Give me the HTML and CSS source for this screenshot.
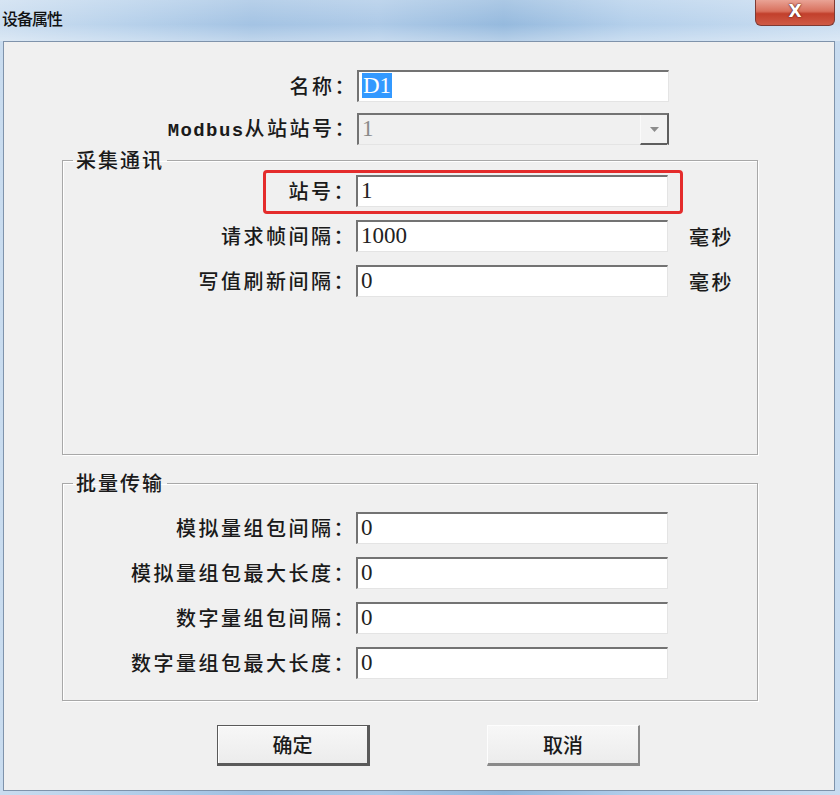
FILE: index.html
```html
<!DOCTYPE html>
<html lang="zh-CN">
<head>
<meta charset="utf-8">
<title>设备属性</title>
<link rel="stylesheet" href="styles.css">
</head>
<body>
<div class="window">
  <div class="titlebar">
    <span class="title">设备属性</span>
    <span class="close">X</span>
  </div>
  <div class="client">
    <div class="row top-row first">
      <label class="lbl">名称：</label>
      <div class="field"><span class="sel">D1</span></div>
    </div>
    <div class="row top-row second">
      <label class="lbl"><span class="mono">Modbus</span>从站站号：</label>
      <div class="combo"><span class="combo-val">1</span><span class="drop"><svg width="9" height="5" viewBox="0 0 9 5"><path d="M0 0H9L4.5 5Z" fill="#8c8c8c"/></svg></span></div>
    </div>

    <fieldset class="group g1">
      <legend>采集通讯</legend>
      <div class="row grow hl-row">
        <span class="highlight"></span>
        <label class="lbl">站号：</label>
        <div class="field">1</div>
      </div>
      <div class="row grow">
        <label class="lbl">请求帧间隔：</label>
        <div class="field">1000</div>
        <span class="unit">毫秒</span>
      </div>
      <div class="row grow">
        <label class="lbl">写值刷新间隔：</label>
        <div class="field">0</div>
        <span class="unit">毫秒</span>
      </div>
    </fieldset>

    <fieldset class="group g2">
      <legend>批量传输</legend>
      <div class="row grow">
        <label class="lbl">模拟量组包间隔：</label>
        <div class="field">0</div>
      </div>
      <div class="row grow">
        <label class="lbl">模拟量组包最大长度：</label>
        <div class="field">0</div>
      </div>
      <div class="row grow">
        <label class="lbl">数字量组包间隔：</label>
        <div class="field">0</div>
      </div>
      <div class="row grow">
        <label class="lbl">数字量组包最大长度：</label>
        <div class="field">0</div>
      </div>
    </fieldset>

    <div class="buttons">
      <button class="btn default">确定</button>
      <button class="btn">取消</button>
    </div>
  </div>
</div>
</body>
</html>
```
FILE: styles.css
```css
* { box-sizing: border-box; }
html, body { margin: 0; padding: 0; }
body {
  width: 840px;
  height: 795px;
  overflow: hidden;
  font-family: "Noto Sans CJK SC", "Noto Sans", sans-serif;
  color: #1a1a1a;
}
.window {
  width: 840px;
  height: 795px;
  background:
    linear-gradient(90deg, #c9dcef 0%, #b4cfea 15%, #9fc0e2 30%, #a9c7e6 45%, #90b6dc 60%, #b0cdea 75%, #c8dcf0 100%);
  display: flex;
  flex-direction: column;
}
.titlebar {
  height: 41px;
  flex: none;
  display: flex;
  justify-content: space-between;
  align-items: flex-start;
  padding: 0 5px 0 2px;
  background: linear-gradient(180deg, rgba(255,255,255,0.25) 0%, rgba(255,255,255,0.05) 60%, rgba(255,255,255,0.35) 100%);
}
.title {
  margin-top: 8px;
  font-size: 16px;
  line-height: 20px;
  font-weight: 500;
  color: #111;
  letter-spacing: -1px;
}
.close {
  width: 80px;
  height: 26px;
  border: 1px solid #7e3a33;
  border-top: none;
  border-radius: 0 0 6px 6px;
  background: linear-gradient(180deg, #e9a395 0%, #d8705d 45%, #c2402c 55%, #cf5a45 100%);
  color: #fff;
  font-family: "DejaVu Sans", sans-serif;
  font-weight: bold;
  font-size: 17px;
  line-height: 22px;
  text-align: center;
  text-shadow: 0 0 2px #5a1a12, 0 0 1px #5a1a12;
}
.client {
  margin: 0 5px 0 3px;
  height: 750px;
  flex: none;
  background: #f0f0f0;
  border: 1px solid #7f93ab;
  display: flex;
  flex-direction: column;
}
.row {
  display: flex;
  align-items: center;
  height: 32px;
  flex: none;
  position: relative;
}
.top-row.first { margin-top: 28px; }
.top-row.second { margin-top: 11px; }
.lbl {
  flex: none;
  text-align: right;
  font-size: 20px;
  font-weight: 500;
  letter-spacing: 2.5px;
  line-height: 28px;
  color: #1a1a1a;
  margin-right: 0;
}
.top-row .lbl { width: 353px; }
.grow .lbl { width: 293px; }
.mono {
  font-family: "Liberation Mono", monospace;
  font-weight: bold;
  font-size: 19px;
  letter-spacing: 1.4px;
}
.field {
  width: 312px;
  height: 32px;
  flex: none;
  background: #fff;
  border-top: 2px solid #737373;
  border-left: 2px solid #737373;
  border-right: 1px solid #e4e4e4;
  border-bottom: 1px solid #e4e4e4;
  font-family: "Liberation Serif", serif;
  font-size: 23px;
  line-height: 28px;
  padding-left: 3px;
  color: #222;
}
.sel {
  background: #3399ff;
  color: #fff;
  padding: 0 1px;
}
.combo {
  width: 312px;
  height: 32px;
  flex: none;
  display: flex;
  justify-content: space-between;
  background: #f0f0f0;
  border-top: 2px solid #737373;
  border-left: 2px solid #737373;
  border-right: 2px solid #5e5e5e;
  border-bottom: 1px solid #e4e4e4;
}
.combo-val {
  font-family: "Liberation Serif", serif;
  font-size: 23px;
  line-height: 28px;
  padding-left: 3px;
  color: #8a8a8a;
}
.drop {
  width: 27px;
  height: 30px;
  display: flex;
  align-items: center;
  justify-content: center;
  border-left: 1px solid #fafafa;
  border-bottom: 2px solid #5e5e5e;
  background: #f2f2f2;
}
.unit {
  margin-left: 21px;
  font-size: 20px;
  font-weight: 500;
  letter-spacing: 2.5px;
  color: #1a1a1a;
}
.group {
  margin: 0 0 0 58px;
  padding: 0;
  min-width: 0;
  width: 696px;
  border: 1px solid #a8a8a8;
  box-shadow: 1px 1px 0 #fff, inset 1px 1px 0 #fff;
  flex: none;
}
.group legend {
  margin-left: 10px;
  padding: 0 3px;
  font-size: 20px;
  font-weight: 500;
  letter-spacing: 2px;
  line-height: 28px;
  height: 28px;
  color: #1a1a1a;
}
.g1 { margin-top: 1px; padding: 1px 0 157px; }
.g2 { margin-top: 14px; padding: 15px 0 21px; }
.grow + .grow { margin-top: 13px; }
.highlight {
  position: absolute;
  left: 200px;
  top: -5px;
  width: 420px;
  height: 44px;
  border: 3px solid #e42c2c;
  border-radius: 4px;
  pointer-events: none;
}
.buttons {
  margin-top: 24px;
  display: flex;
  padding-left: 213px;
  gap: 117px;
}
.btn {
  width: 153px;
  height: 41px;
  font-family: "Noto Sans CJK SC", sans-serif;
  font-size: 20px;
  font-weight: 500;
  color: #1a1a1a;
  background: linear-gradient(180deg, #f7f7f7 0%, #ececec 100%);
  border-top: 1px solid #fdfdfd;
  border-left: 1px solid #fdfdfd;
  border-right: 2px solid #8a8a8a;
  border-bottom: 3px solid #8a8a8a;
  padding: 0;
}
.btn.default {
  border-top: 1px solid #5a5a5a;
  border-left: 1px solid #5a5a5a;
  border-right: 3px solid #5a5a5a;
  border-bottom: 3px solid #5a5a5a;
  box-shadow: inset 1px 1px 0 #fff;
}
```
